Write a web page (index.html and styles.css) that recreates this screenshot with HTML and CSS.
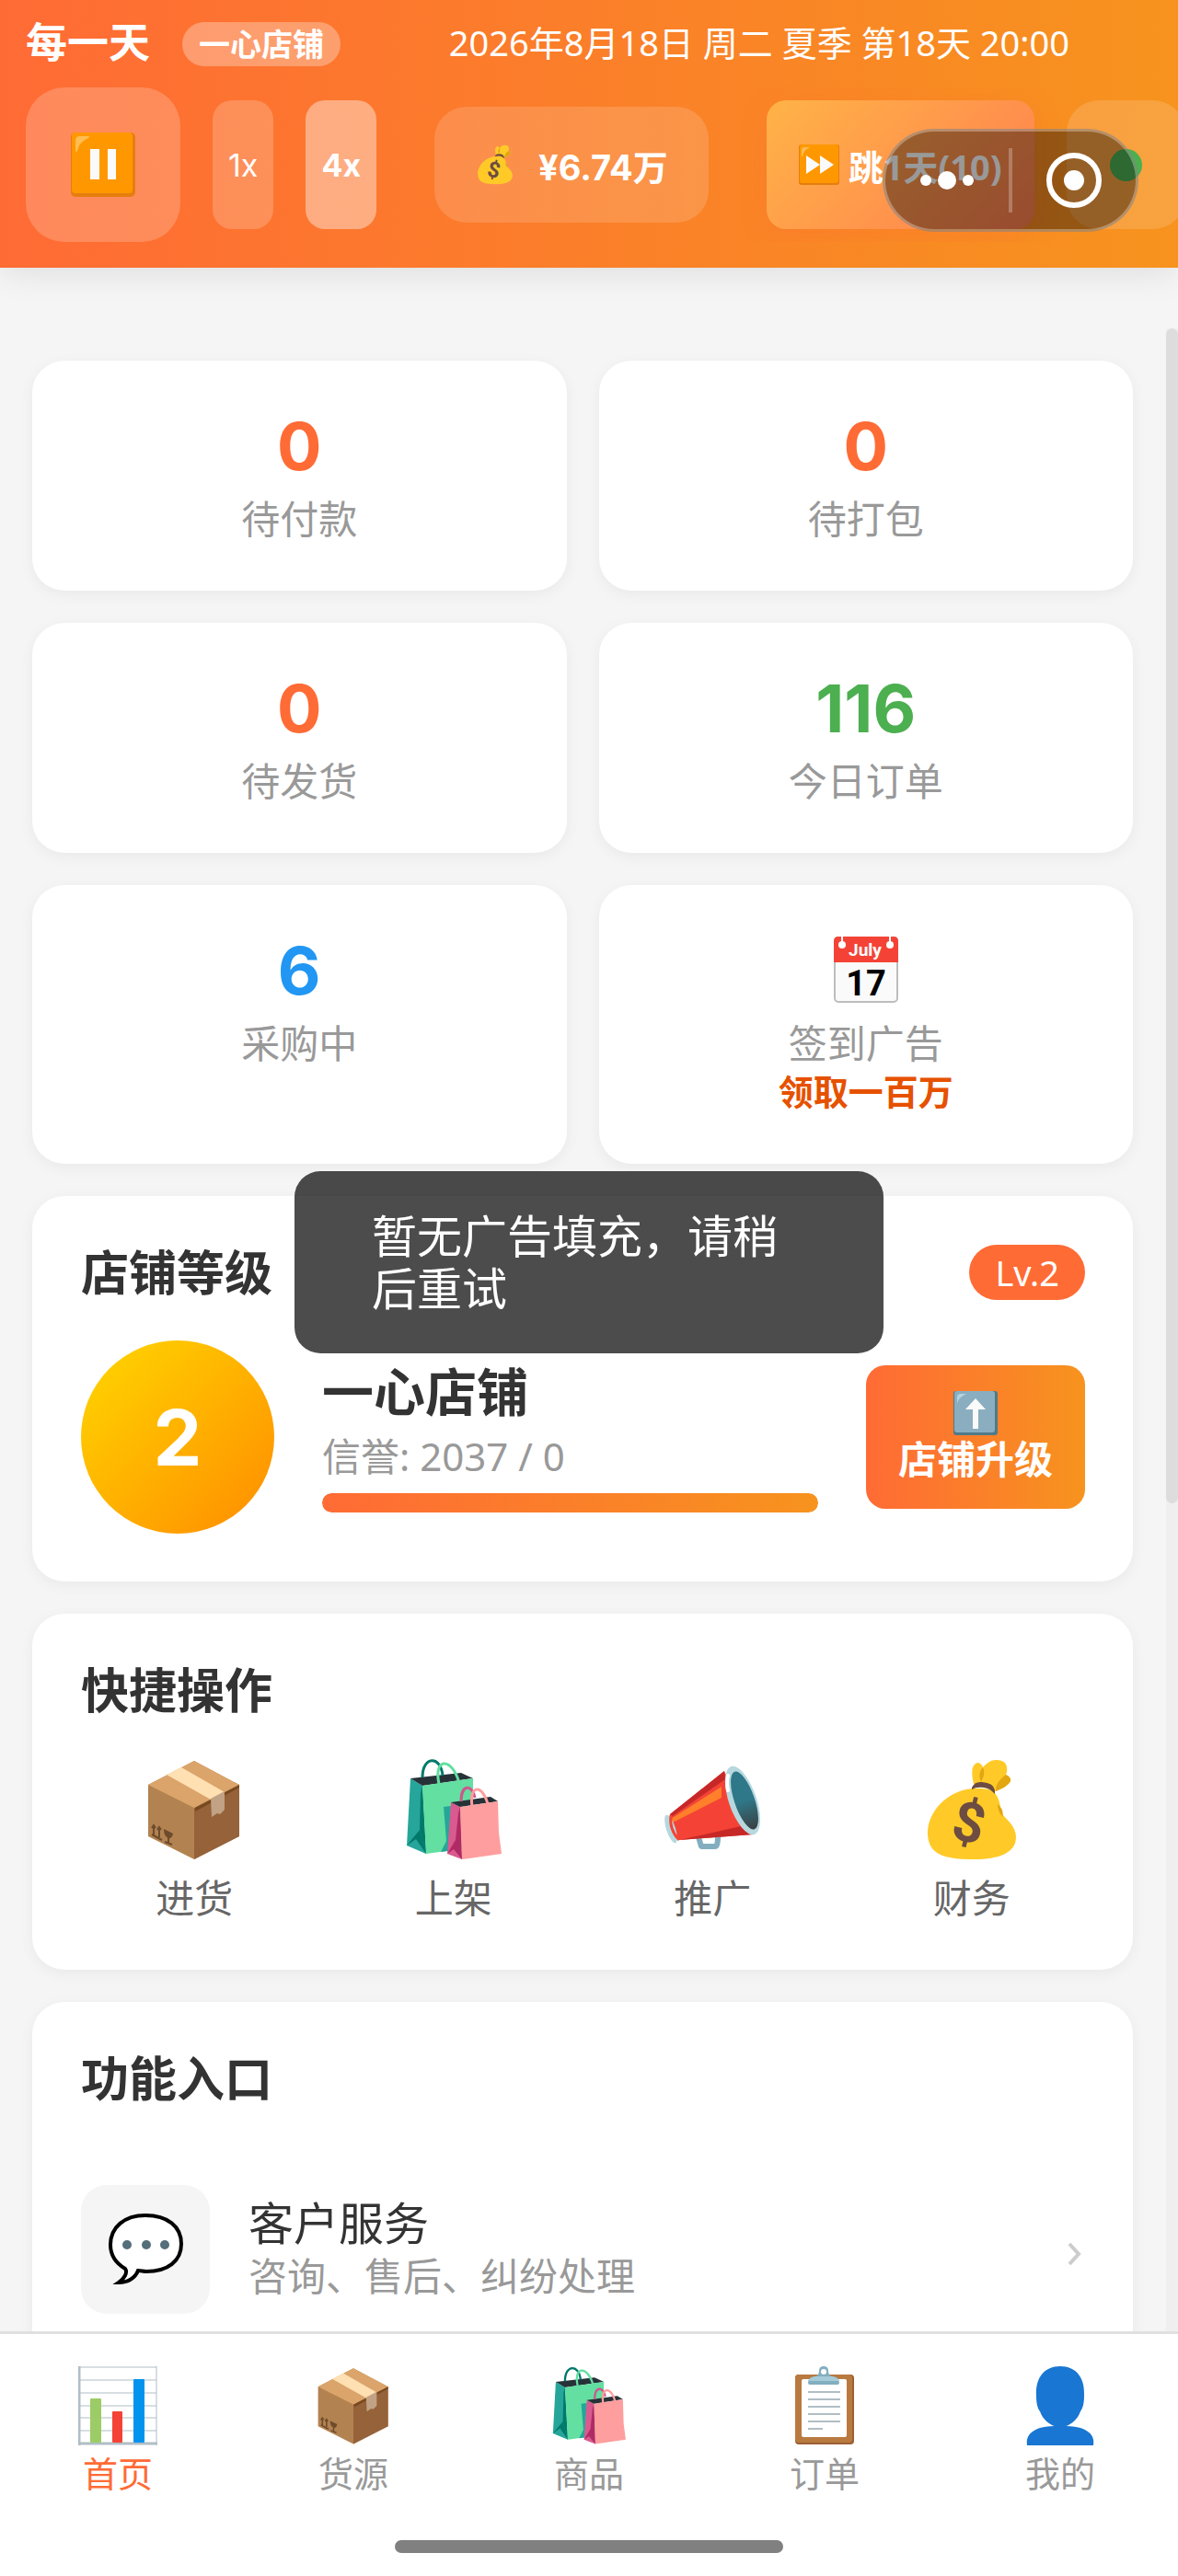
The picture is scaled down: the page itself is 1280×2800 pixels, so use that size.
FILE: index.html
```html
<!DOCTYPE html>
<html lang="zh-CN">
<head>
    <meta charset="UTF-8">
    <meta name="viewport" content="width=device-width, initial-scale=1.0">
    <title>每一天</title>
    <link rel="stylesheet" href="styles.css">
</head>
<body>
    <!-- 公用图标 -->
    <svg class="sprite" aria-hidden="true">
        <symbol id="icon-box" viewBox="0 0 112 112">
            <path d="M6 29 56 3l49 26v56l-49 25L6 85z" fill="#b38251"/>
            <path d="M56 54l49-25v56l-49 25z" fill="#966239"/>
            <path d="M6 29 56 3l49 26-49 25z" fill="#dba46a"/>
            <path d="M57 54l48-25v3L57 58z" fill="#78491f"/>
            <path d="M26 18 42 10l47 27-15 8z" fill="#ffe0b2"/>
            <path d="M74 44l15-8v20l-5 5-3-1-6 4z" fill="#c1a285"/>
            <path d="M12 84V73m-2 3 2-3 2 3M18 86V75m-2 3 2-3 2 3M10 83l11 6M28 86v6m-4-1 8 3" fill="none" stroke="#6d4c2c" stroke-width="2"/>
            <path d="M23 77l10 5q-1 6-5 5-5-2-5-10z" fill="#6d4c2c"/>
        </symbol>
        <symbol id="icon-bags" viewBox="0 0 112 112">
            <path d="M9 22l13 8 4 74-21-9z" fill="#26a69a"/>
            <path d="M5 95l14-17 7 26-11-16z" fill="#00796b"/>
            <path d="M20 38l2-8 4 74-7-26z" fill="#00796b"/>
            <path d="M9 22l55-6 13 6-55 8z" fill="#263238"/>
            <path d="M22 30l55-8v75l-51 7z" fill="#62dfa1"/>
            <path d="M45 53l8-1-3 49-8 1 6-12z" fill="#26a69a"/>
            <path d="M22 21C22 -3 42 -3 44 19" fill="none" stroke="#00796b" stroke-width="3"/>
            <path d="M42 35C30 -1 55 -5 63 31" fill="none" stroke="#62dfa1" stroke-width="3"/>
            <path d="M53 48l10 5 2 57-16-6z" fill="#d85a8f"/>
            <path d="M49 104l9-15 7 21-9-11zM61 60l2-7 2 57-7-21z" fill="#b02a64"/>
            <path d="M53 48l43-6 8 5-41 6z" fill="#263238"/>
            <path d="M63 53l41-6 1 34 3 23-43 6z" fill="#ff9e9e"/>
            <path d="M64 47C64 28 76 28 79 43" fill="none" stroke="#d0568d" stroke-width="3"/>
            <path d="M77 57C70 29 88 25 94 54" fill="none" stroke="#ff9e9e" stroke-width="3"/>
        </symbol>
        <symbol id="icon-money" viewBox="0 0 112 112">
            <path d="M58 28q-5-20 4-23 4 0 6 5Q76 1 83 2q9 0 11 7 1 5-1 9 6 3 5 7-3 6-16 11z" fill="#ffca28"/>
            <path d="M82 34q0-8 11-16 6 3 5 7-3 6-16 11zM66 26q-4-9 2-16 3 6-1 14z" fill="#e2a610"/>
            <path d="M60 33c8 0 17 0 21 5 6 7 5 14 8 23 5 6 15 13 15 25 0 17-19 24-45 24-31 0-51-4-51-29 0-24 24-48 52-48z" fill="#ffca28"/>
            <path d="M84 50q6 4 6 14-6-5-6-14z" fill="#e2a610"/>
            <path d="M56 32q3-7 11-6 13 1 14 9v4q-5-6-12-7-8-1-13 2z" fill="#6d4c41"/>
            <text x="53" y="91" transform="rotate(13 53 70)" text-anchor="middle" class="icon-dollar">$</text>
        </symbol>
    </svg>

    <!-- 顶部栏 -->
    <header class="header">
        <div class="header-top">
            <h1 class="app-name">每一天</h1>
            <span class="shop-badge">一心店铺</span>
            <span class="game-date">2026年8月18日 周二 夏季 第18天 20:00</span>
        </div>
        <div class="header-tools">
            <button class="pause-btn" aria-label="暂停">
                <svg width="70" height="70" viewBox="0 0 70 70">
                    <rect width="70" height="70" rx="5" fill="#e67e0e"/>
                    <rect x="1" width="66" height="66" rx="4" fill="#ff9800"/>
                    <path d="M5 20V9q0-5 5-5h9q2 1 0 2Q9 10 7 20q-1 2-2 0z" fill="#ffbd52"/>
                    <path d="M21 18h10v33H21zM40 18h9v33h-9z" fill="#fafafa"/>
                </svg>
            </button>
            <button class="speed-btn">1x</button>
            <button class="speed-btn active">4x</button>
            <div class="money">
                <svg width="44" height="44"><use href="#icon-money"/></svg>
                <span>¥6.74万</span>
            </div>
            <button class="skip-btn">
                <svg width="44" height="44" viewBox="0 0 44 44">
                    <rect width="44" height="44" rx="3" fill="#e67e0e"/>
                    <rect x="1" width="42" height="42" rx="3" fill="#ff9800"/>
                    <path d="M3 13V6q0-3 4-3h5Q5 6 4 13z" fill="#ffbd52"/>
                    <path d="M8 12l15 10L8 32zM23 12l15 10-15 10z" fill="#fafafa"/>
                </svg>
                <span>跳1天(10)</span>
            </button>
            <button class="status-btn" aria-label="状态"><span class="status-dot"></span></button>
        </div>
        <!-- 小程序胶囊 -->
        <div class="capsule">
            <button aria-label="更多">
                <svg width="60" height="24" viewBox="0 0 60 24" fill="#fff">
                    <circle cx="7" cy="12" r="6"/>
                    <circle cx="30" cy="12" r="10"/>
                    <circle cx="53" cy="12" r="6"/>
                </svg>
            </button>
            <span class="capsule-line"></span>
            <button aria-label="关闭">
                <svg width="62" height="62" viewBox="0 0 62 62">
                    <circle cx="31" cy="31" r="27" fill="none" stroke="#fff" stroke-width="6"/>
                    <circle cx="31" cy="31" r="11" fill="#fff"/>
                </svg>
            </button>
        </div>
    </header>

    <!-- 主要内容 -->
    <main class="main-content">
        <div class="stats">
            <div class="stat-card">
                <div class="stat-num">0</div>
                <div class="stat-label">待付款</div>
            </div>
            <div class="stat-card">
                <div class="stat-num">0</div>
                <div class="stat-label">待打包</div>
            </div>
            <div class="stat-card">
                <div class="stat-num">0</div>
                <div class="stat-label">待发货</div>
            </div>
            <div class="stat-card">
                <div class="stat-num green">116</div>
                <div class="stat-label">今日订单</div>
            </div>
            <div class="stat-card">
                <div class="stat-num blue">6</div>
                <div class="stat-label">采购中</div>
            </div>
            <div class="stat-card">
                <div class="stat-num">
                    <svg width="70" height="72" viewBox="0 0 70 72">
                        <rect x="1" y="1" width="68" height="70" rx="4" fill="#fafafa" stroke="#bdbdbd" stroke-width="2"/>
                        <path d="M0 28V5q0-5 5-5h60q5 0 5 5v23z" fill="#f44336"/>
                        <path d="M9 0v8M61 0v8" stroke="#fff" stroke-width="2"/>
                        <circle cx="9" cy="9" r="4" fill="#fff"/>
                        <circle cx="61" cy="9" r="4" fill="#fff"/>
                        <text x="34" y="21" text-anchor="middle" class="cal-month">July</text>
                        <text x="35" y="64" text-anchor="middle" class="cal-day">17</text>
                    </svg>
                </div>
                <div class="stat-label">签到广告</div>
                <div class="stat-reward">领取一百万</div>
            </div>
        </div>

        <!-- 店铺等级 -->
        <section class="card">
            <div class="card-header">
                <h2>店铺等级</h2>
                <span class="level-badge">Lv.2</span>
            </div>
            <div class="level-row">
                <div class="level-circle">2</div>
                <div class="level-info">
                    <div class="level-name">一心店铺</div>
                    <div class="level-credit">信誉: 2037 / 0</div>
                    <div class="progress"><div class="progress-bar" style="width: 100%"></div></div>
                </div>
                <button class="upgrade-btn">
                    <svg width="48" height="48" viewBox="0 0 48 48">
                        <rect width="48" height="48" rx="3" fill="#4f7a8a"/>
                        <rect x="1" width="44" height="45" rx="3" fill="#8aaebf"/>
                        <path d="M4 14V7q0-4 4-4h6Q5 7 4 14z" fill="#b5d3df"/>
                        <path d="M24 8l11 12h-8v21h-6V20h-8z" fill="#fafafa"/>
                    </svg>
                    <span>店铺升级</span>
                </button>
            </div>
        </section>

        <!-- 快捷操作 -->
        <section class="card">
            <div class="card-header">
                <h2>快捷操作</h2>
            </div>
            <div class="quick-actions">
                <a href="#" class="quick-item">
                    <svg width="112" height="112"><use href="#icon-box"/></svg>
                    <span>进货</span>
                </a>
                <a href="#" class="quick-item">
                    <svg width="112" height="112"><use href="#icon-bags"/></svg>
                    <span>上架</span>
                </a>
                <a href="#" class="quick-item">
                    <svg width="112" height="112" viewBox="0 0 112 112">
                        <defs>
                            <linearGradient id="horn" x1="0" y1="0" x2="0" y2="1">
                                <stop offset="0.5" stop-color="#2f7889"/>
                                <stop offset="1" stop-color="#3a3f42"/>
                            </linearGradient>
                        </defs>
                        <path d="M41 86l3 10h15q3 0 3-10" fill="none" stroke="#82aec0" stroke-width="6" stroke-linejoin="round"/>
                        <path d="M69 14 10 61q0 18 10 28l80-6z" fill="#f44336"/>
                        <path d="M69 14 10 61v4l60-42zM20 89l80-6-13-9z" fill="#c62828"/>
                        <path d="M66 31v12L11 71v-5z" fill="#ff7f2a"/>
                        <ellipse cx="11" cy="77" rx="5" ry="16" transform="rotate(-18 11 77)" fill="#b6d8de"/>
                        <path d="M11 62q-2 16 9 27" fill="none" stroke="#f44336" stroke-width="3"/>
                        <ellipse cx="89" cy="46" rx="15" ry="39" transform="rotate(-19 89 46)" fill="#b6d8de"/>
                        <ellipse cx="91" cy="46" rx="11" ry="33" transform="rotate(-19 91 46)" fill="url(#horn)"/>
                        <path d="M73 19q-2 7 0 16" fill="none" stroke="#fff" stroke-width="4" stroke-linecap="round"/>
                    </svg>
                    <span>推广</span>
                </a>
                <a href="#" class="quick-item">
                    <svg width="112" height="112"><use href="#icon-money"/></svg>
                    <span>财务</span>
                </a>
            </div>
        </section>

        <!-- 功能入口 -->
        <section class="card">
            <div class="card-header">
                <h2>功能入口</h2>
            </div>
            <a href="#" class="menu-item">
                <span class="menu-icon">
                    <svg width="84" height="84" viewBox="0 0 84 84">
                        <path d="M42 5C19 5 4 18 4 37c0 11 6 20 16 26 3 4-1 11-7 15 10 0 18-5 21-13 3 0 6 1 9 1 23 0 38-11 38-30S66 5 42 5z" fill="#fff" stroke="#000" stroke-width="4"/>
                        <circle cx="22" cy="37" r="5" fill="#546e7a"/>
                        <circle cx="43" cy="37" r="5" fill="#546e7a"/>
                        <circle cx="63" cy="37" r="5" fill="#546e7a"/>
                    </svg>
                </span>
                <span class="menu-text">
                    <span class="menu-title">客户服务</span>
                    <span class="menu-desc">咨询、售后、纠纷处理</span>
                </span>
                <svg class="menu-arrow" width="24" height="36" viewBox="0 0 24 36">
                    <path d="M7 12l10 11L7 34" fill="none" stroke="#ccc" stroke-width="4"/>
                </svg>
            </a>
        </section>

        <div class="scroll-track"><div class="scroll-thumb"></div></div>
    </main>

    <!-- 底部导航 -->
    <nav class="tabbar">
        <div class="tabs">
            <a href="#" class="tab active">
                <svg width="86" height="86" viewBox="0 0 86 86">
                    <path d="M1 1h84v84H1z" fill="#fff"/>
                    <path d="M1 1h84M1 15h84M1 29h84M1 43h84M1 56h84M1 70h84M85 0v86" stroke="#b0bec5" stroke-width="1"/>
                    <path d="M1 0v86M0 84h86" stroke="#b0bec5" stroke-width="3"/>
                    <rect x="13" y="35" width="12" height="48" rx="1" fill="#9ccc65"/>
                    <rect x="37" y="49" width="11" height="34" rx="1" fill="#f44336"/>
                    <rect x="60" y="14" width="12" height="69" rx="1" fill="#0293ee"/>
                </svg>
                <span>首页</span>
            </a>
            <a href="#" class="tab">
                <svg width="86" height="86"><use href="#icon-box"/></svg>
                <span>货源</span>
            </a>
            <a href="#" class="tab">
                <svg width="86" height="86"><use href="#icon-bags"/></svg>
                <span>商品</span>
            </a>
            <a href="#" class="tab">
                <svg width="86" height="86" viewBox="0 0 86 86">
                    <rect x="11" y="9" width="64" height="76" rx="4" fill="#9c6034"/>
                    <rect x="11" y="9" width="62" height="74" rx="4" fill="#b97a40"/>
                    <rect x="18" y="14" width="49" height="63" rx="2" fill="#fff"/>
                    <path d="M25 28h35M25 36h35M25 44h35M25 52h35M25 60h35M25 68h16" stroke="#b0bec5" stroke-width="2"/>
                    <path d="M25 18q0-6 8-7 4-1 4-6 0-5 5-5t5 5q0 5 4 6 8 1 8 7 0 2-2 2H27q-2 0-2-2z" fill="#82aec0"/>
                    <path d="M25 16q1-4 8-5h18q7 1 8 5z" fill="#a5cbd8"/>
                    <circle cx="42" cy="6" r="3" fill="#fff"/>
                </svg>
                <span>订单</span>
            </a>
            <a href="#" class="tab">
                <svg width="86" height="86" viewBox="0 0 86 86" fill="#1976d2">
                    <path d="M43 0c17 0 27 12 26 32 0 7-1 13-4 17C62 58 54 64 49 65q21 0 28 10 3 4 2 11H7q-1-7 2-11 7-10 28-10c-5-1-13-7-16-16-3-4-4-10-4-17C16 12 26 0 43 0z"/>
                </svg>
                <span>我的</span>
            </a>
        </div>
        <div class="home-indicator"></div>
    </nav>

    <!-- 提示 -->
    <div class="toast" role="status">暂无广告填充，请稍后重试</div>
</body>
</html>
```
FILE: styles.css
```css
* {
    margin: 0;
    padding: 0;
    box-sizing: border-box;
}

body {
    display: flex;
    flex-direction: column;
    height: 100vh;
    overflow: hidden;
    background-color: #f5f5f5;
    color: #333;
    font-family: 'Noto Sans', 'Noto Sans CJK SC', sans-serif;
}

button {
    border: none;
    background: none;
    color: inherit;
    font-family: inherit;
    cursor: pointer;
}

a {
    color: inherit;
    text-decoration: none;
}

svg {
    display: block;
    flex: none;
}

.sprite {
    position: absolute;
    width: 0;
    height: 0;
}

.icon-dollar {
    font: bold 60px Roboto, sans-serif;
    fill: #6d4c41;
}

/* 数字字体 */
.speed-btn,
.money,
.stat-num,
.level-circle {
    font-family: Inter, 'Noto Sans CJK SC', sans-serif;
}

/* 顶部栏 */
.header {
    position: relative;
    z-index: 10;
    flex: none;
    padding: 24px 28px 28px;
    background: linear-gradient(90deg, #ff6b35, #f7931e);
    box-shadow: 0 4px 35px rgba(0, 0, 0, 0.1);
    color: white;
    white-space: nowrap;
}

.header-top {
    display: flex;
    align-items: flex-start;
    margin-bottom: 23px;
}

.app-name {
    font-size: 45px;
    line-height: 44px;
}

.shop-badge {
    margin-left: 35px;
    padding: 0 18px;
    border-radius: 24px;
    background-color: rgba(255, 255, 255, 0.3);
    font-size: 34px;
    line-height: 48px;
    font-weight: bold;
}

.game-date {
    margin-left: auto;
    margin-right: 90px;
    font-size: 38px;
    line-height: 44px;
}

.header-tools {
    display: flex;
    align-items: center;
    gap: 35px;
    margin-right: -28px;
    overflow: hidden;
}

.pause-btn {
    display: flex;
    flex: none;
    align-items: center;
    justify-content: center;
    width: 168px;
    height: 168px;
    border-radius: 42px;
    background-color: rgba(255, 255, 255, 0.2);
}

.speed-btn {
    flex: none;
    height: 140px;
    padding: 0 17px;
    border-radius: 21px;
    background-color: rgba(255, 255, 255, 0.2);
    font-size: 34px;
}

.speed-btn.active {
    background-color: rgba(255, 255, 255, 0.4);
    font-weight: bold;
}

.money {
    display: flex;
    flex: none;
    align-items: center;
    gap: 25px;
    height: 126px;
    margin: 0 28px;
    padding: 0 44px;
    border-radius: 35px;
    background-color: rgba(255, 255, 255, 0.15);
    font-size: 38px;
    font-weight: bold;
}

.skip-btn {
    display: flex;
    flex: none;
    align-items: center;
    gap: 10px;
    height: 140px;
    padding: 0 35px;
    border-radius: 21px;
    background: linear-gradient(135deg, #ffb347, #ff7f50);
    box-shadow: 0 7px 28px rgba(255, 107, 53, 0.3);
    font-size: 38px;
    font-weight: bold;
}

.status-btn {
    flex: none;
    height: 140px;
    padding: 0 47px;
    border-radius: 35px;
    background-color: rgba(255, 255, 255, 0.15);
}

.status-dot {
    display: block;
    width: 35px;
    height: 35px;
    border-radius: 50%;
    background-color: #4caf50;
}

/* 小程序胶囊 */
.capsule {
    position: absolute;
    top: 140px;
    right: 43px;
    display: flex;
    align-items: center;
    width: 278px;
    height: 112px;
    border: 3px solid rgba(255, 255, 255, 0.3);
    border-radius: 56px;
    background-color: rgba(0, 0, 0, 0.4);
}

.capsule button {
    display: flex;
    flex: 1;
    justify-content: center;
}

.capsule-line {
    width: 4px;
    height: 70px;
    background-color: rgba(255, 255, 255, 0.25);
}

/* 主要内容 */
.main-content {
    position: relative;
    flex: 1;
    min-height: 0;
    padding: 101px 49px 0 35px;
    overflow: hidden;
}

.stats {
    display: grid;
    grid-template-columns: 1fr 1fr;
    gap: 35px;
    margin-bottom: 35px;
}

.stat-card {
    padding: 52px 35px;
    border-radius: 35px;
    background-color: white;
    box-shadow: 0 4px 16px rgba(0, 0, 0, 0.05);
    text-align: center;
}

.stat-num {
    display: flex;
    align-items: center;
    justify-content: center;
    height: 80px;
    margin-bottom: 14px;
    color: #ff6b35;
    font-size: 72px;
    font-weight: bold;
}

.stat-num.green {
    color: #4caf50;
}

.stat-num.blue {
    color: #2196f3;
}

.stat-label {
    color: #999;
    font-size: 42px;
    line-height: 52px;
}

.stat-reward {
    color: #e65100;
    font-size: 38px;
    line-height: 53px;
    font-weight: bold;
}

.cal-month {
    font: bold 19px Roboto, sans-serif;
    fill: white;
}

.cal-day {
    font: bold 38px Roboto, sans-serif;
    fill: black;
}

.card {
    margin-bottom: 35px;
    padding: 53px 52px 52px 53px;
    border-radius: 35px;
    background-color: white;
    box-shadow: 0 4px 16px rgba(0, 0, 0, 0.05);
}

.card-header {
    display: flex;
    align-items: center;
    justify-content: space-between;
    margin-bottom: 44px;
}

.card-header h2 {
    font-size: 52px;
    line-height: 60px;
}

.level-badge {
    padding: 0 28px;
    border-radius: 30px;
    background-color: #ff6b35;
    color: white;
    font-size: 38px;
    line-height: 60px;
}

/* 店铺等级 */
.level-row {
    display: flex;
    align-items: center;
    gap: 52px;
}

.level-circle {
    display: flex;
    flex: none;
    align-items: center;
    justify-content: center;
    width: 210px;
    height: 210px;
    border-radius: 50%;
    background: linear-gradient(135deg, #ffd700, #ff8c00);
    color: white;
    font-size: 84px;
    font-weight: bold;
}

.level-info {
    flex: 1;
}

.level-name {
    margin-bottom: 14px;
    font-size: 56px;
    line-height: 62px;
    font-weight: bold;
}

.level-credit {
    margin-bottom: 14px;
    color: #999;
    font-size: 42px;
    line-height: 52px;
}

.progress {
    height: 21px;
    border-radius: 10px;
    background-color: #f0f0f0;
    overflow: hidden;
}

.progress-bar {
    height: 100%;
    border-radius: 10px;
    background: linear-gradient(90deg, #ff6b35, #f7931e);
}

.upgrade-btn {
    display: flex;
    flex: none;
    flex-direction: column;
    align-items: center;
    padding: 28px 35px;
    border-radius: 21px;
    background: linear-gradient(90deg, #ff6b35, #f7931e);
    color: white;
    font-size: 42px;
    line-height: 52px;
    font-weight: bold;
}

/* 快捷操作 */
.quick-actions {
    display: grid;
    grid-template-columns: repeat(4, 1fr);
    gap: 35px;
}

.quick-item {
    display: flex;
    flex-direction: column;
    align-items: center;
    gap: 14px;
    color: #666;
    font-size: 42px;
    line-height: 52px;
}

/* 功能入口 */
.menu-item {
    display: flex;
    align-items: center;
    gap: 42px;
    padding: 42px 0;
}

.menu-icon {
    display: flex;
    flex: none;
    align-items: center;
    justify-content: center;
    width: 140px;
    height: 140px;
    border-radius: 28px;
    background-color: #f5f5f5;
}

.menu-text {
    display: flex;
    flex: 1;
    flex-direction: column;
    padding-bottom: 6px;
}

.menu-title {
    font-size: 49px;
    line-height: 64px;
}

.menu-desc {
    color: #999;
    font-size: 42px;
    line-height: 52px;
}

/* 滚动条 */
.scroll-track {
    position: absolute;
    top: 66px;
    right: 0;
    bottom: 0;
    width: 13px;
    background-color: #efefef;
}

.scroll-thumb {
    height: 1277px;
    border-radius: 7px;
    background-color: #ddd;
}

/* 底部导航 */
.tabbar {
    z-index: 10;
    flex: none;
    padding: 35px 0 25px;
    border-top: 3px solid #e0e0e0;
    background-color: white;
}

.tabs {
    display: grid;
    grid-template-columns: repeat(5, 1fr);
    margin-bottom: 49px;
}

.tab {
    display: flex;
    flex-direction: column;
    align-items: center;
    gap: 6px;
    color: #999;
    font-size: 38px;
    line-height: 48px;
}

.tab.active {
    color: #ff6b35;
}

.home-indicator {
    width: 33%;
    height: 14px;
    margin: 0 auto;
    border-radius: 7px;
    background-color: #808080;
}

/* 提示 */
.toast {
    position: fixed;
    top: 49%;
    left: 50%;
    z-index: 100;
    width: 50%;
    padding: 42px 84px;
    border-radius: 28px;
    background-color: rgba(0, 0, 0, 0.7);
    color: white;
    font-size: 49px;
    line-height: 57px;
    transform: translate(-50%, -50%);
}
```
